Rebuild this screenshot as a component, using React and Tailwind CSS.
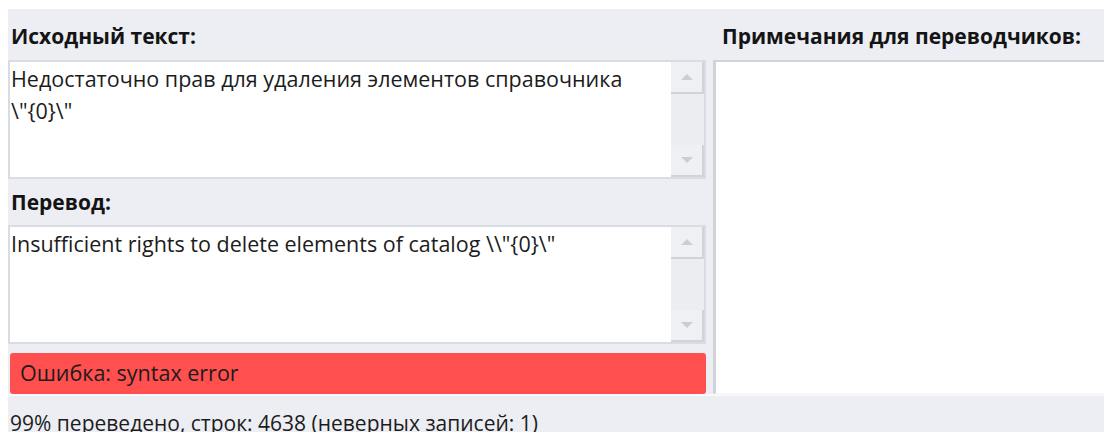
import React from "react";

function ScrollButton({ dir }) {
  return (
    <div className="flex h-[32px] w-full items-center justify-center border-b-2 border-r-2 border-[#cfd3da] bg-[#eef0f3]">
      <svg width="14" height="8" viewBox="0 0 14 8">
        {dir === "up" ? (
          <path d="M1 7 L7 1 L13 7 Z" fill="#c9cdd4" />
        ) : (
          <path d="M1 1 L7 7 L13 1 Z" fill="#c9cdd4" />
        )}
      </svg>
    </div>
  );
}

function ScrollBar() {
  return (
    <div className="flex w-[33px] shrink-0 flex-col bg-[#e9ebef]">
      <ScrollButton dir="up" />
      {/* checkered track */}
      <div className="flex-1 bg-[repeating-conic-gradient(#e7e9ed_0_25%,#f0f1f4_0_50%)] bg-[length:2px_2px]" />
      <ScrollButton dir="down" />
    </div>
  );
}

function TextBox({ children }) {
  return (
    <div className="flex h-[119px] border-2 border-[#d9dce2] bg-white">
      <div className="flex-1 px-[1px] pt-[1px] text-[21.5px] leading-[32px] text-[#1c1c1c]">{children}</div>
      <ScrollBar />
    </div>
  );
}

function Header({ children, className = "" }) {
  return (
    <div className={"flex items-center pl-[3px] text-[21px] font-bold text-[#141414] " + className}>{children}</div>
  );
}

export default function App() {
  return (
    <div className="h-[432px] w-[1104px] overflow-hidden bg-white pl-2 pt-[9px] font-['Open_Sans','Noto_Sans',sans-serif]">
      <div className="flex h-full flex-col bg-[#eceef3]">
        <div className="flex h-[387px]">
          <div className="flex w-[698px] shrink-0 flex-col">
            <Header className="h-[51px] pt-[4px]">Исходный текст:</Header>
            <TextBox>
              Недостаточно прав для удаления элементов справочника
              <br />
              {'\\"{0}\\"'}
            </TextBox>
            <Header className="h-[46px] pt-[2px]">Перевод:</Header>
            <TextBox>{'Insufficient rights to delete elements of catalog \\\\"{0}\\"'}</TextBox>
            <div className="ml-[2px] mt-[9px] flex h-[41px] items-center rounded-[3px] bg-[#ff4f4f] pl-[10px] text-[21.5px] text-[#1c1c1c]">
              Ошибка: syntax error
            </div>
          </div>
          <div className="ml-[7px] flex flex-1 flex-col">
            <Header className="h-[51px] pl-[9px] pt-[4px]">Примечания для переводчиков:</Header>
            <div className="flex-1 border-l-[3px] border-t-2 border-b border-[#cfd3da] border-b-[#f4f5f8] bg-white" />
          </div>
        </div>
        <div className="border-t-2 border-[#f7f8fa] pl-[2px] pt-[11px] text-[21px] leading-[32px] text-[#1c1c1c]">
          99% переведено, строк: 4638 (неверных записей: 1)
        </div>
      </div>
    </div>
  );
}
